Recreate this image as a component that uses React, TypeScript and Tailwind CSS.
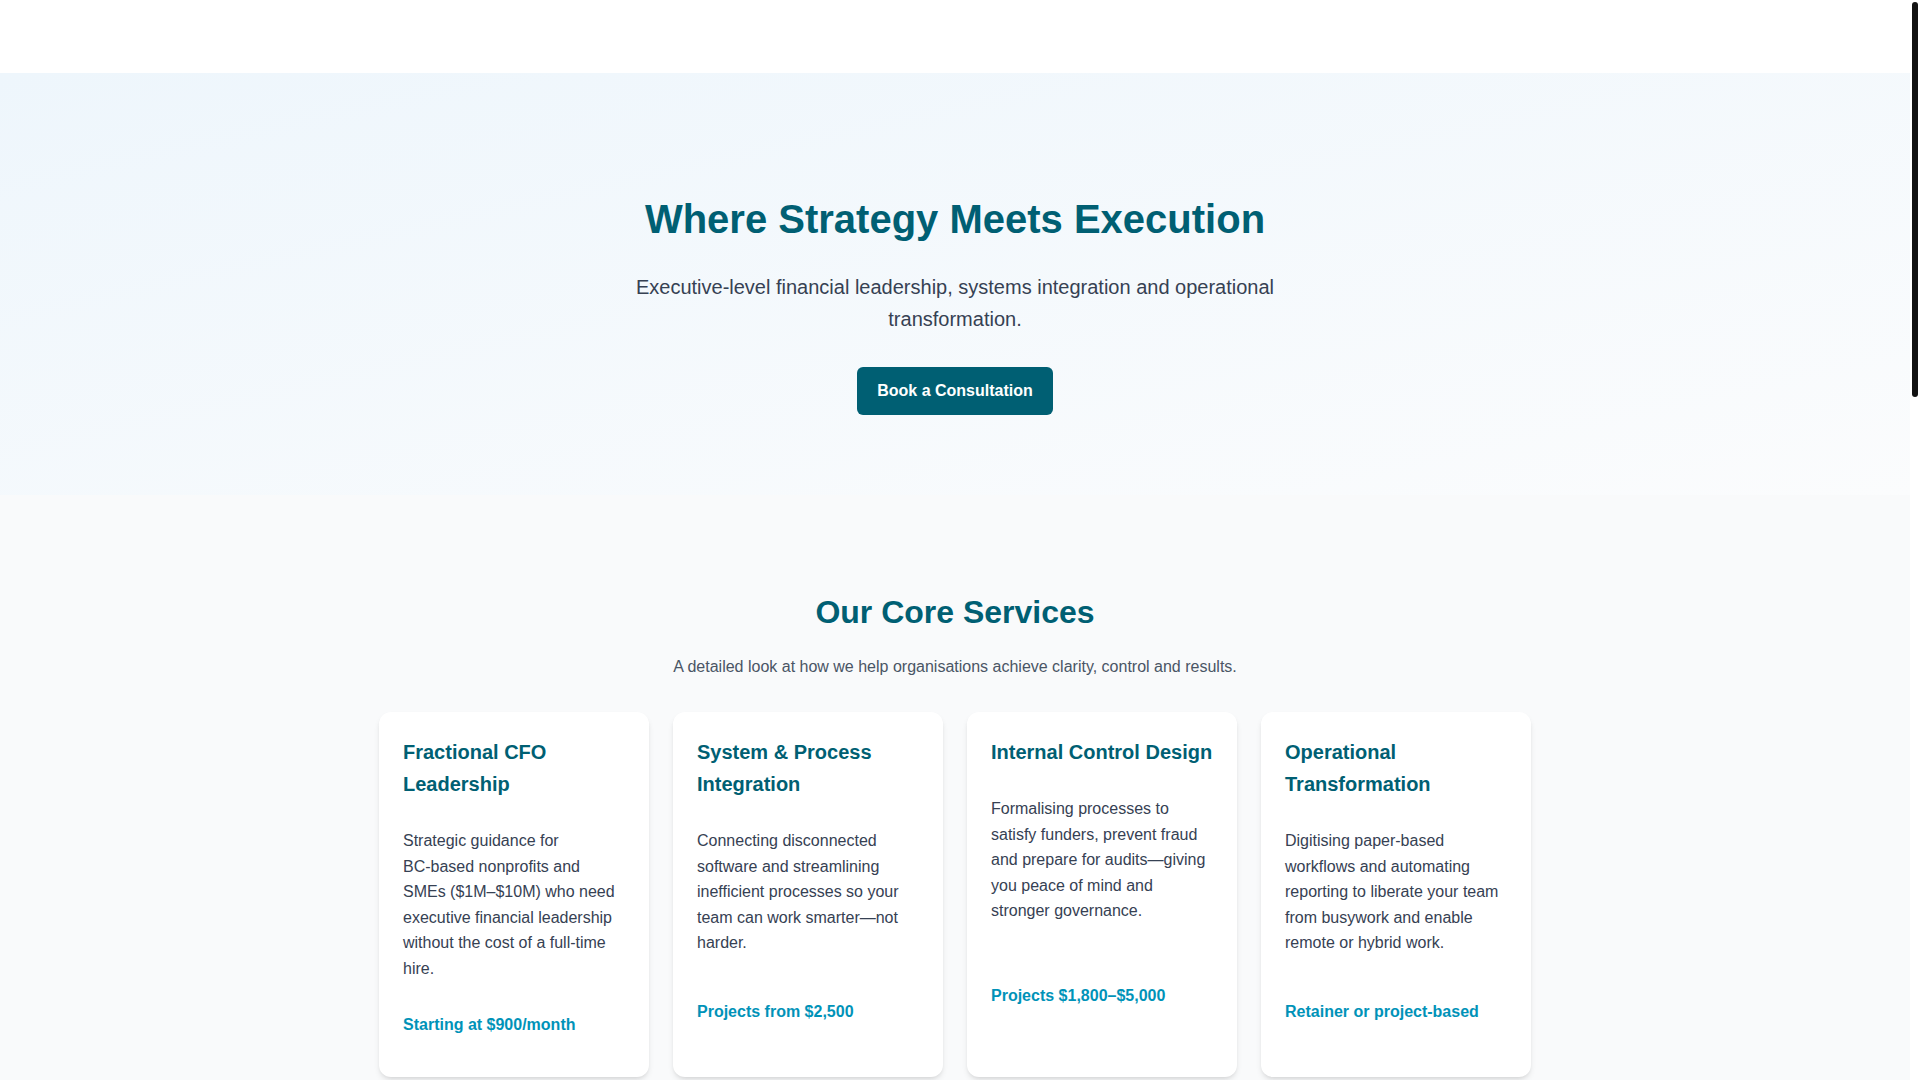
import type { ReactNode } from "react";

const services: { title: string; body: ReactNode; price: string }[] = [
  {
    title: "Fractional CFO Leadership",
    body: (
      <>
        Strategic guidance for <span className="whitespace-nowrap">BC-based</span> nonprofits and SMEs
        ($1M–$10M) who need executive financial leadership without the cost of a full-time hire.
      </>
    ),
    price: "Starting at $900/month",
  },
  {
    title: "System & Process Integration",
    body: "Connecting disconnected software and streamlining inefficient processes so your team can work smarter—not harder.",
    price: "Projects from $2,500",
  },
  {
    title: "Internal Control Design",
    body: "Formalising processes to satisfy funders, prevent fraud and prepare for audits—giving you peace of mind and stronger governance.",
    price: "Projects $1,800–$5,000",
  },
  {
    title: "Operational Transformation",
    body: "Digitising paper-based workflows and automating reporting to liberate your team from busywork and enable remote or hybrid work.",
    price: "Retainer or project-based",
  },
];

function ServiceCard({ title, body, price }: { title: string; body: ReactNode; price: string }) {
  return (
    <div className="flex min-h-[365px] flex-col rounded-xl bg-white p-6 shadow-md">
      <h3 className="mb-7 text-xl leading-8 font-bold text-[#005f73]">{title}</h3>
      <p className="text-base leading-[1.6] text-gray-700">{body}</p>
      <div className="flex flex-1 items-center pt-4">
        <span className="text-base leading-6 font-bold text-cyan-600">{price}</span>
      </div>
    </div>
  );
}

export default function App() {
  return (
    <div className="flex h-screen bg-white font-['Liberation_Sans',Arial,sans-serif]">
      <div className="flex-1 overflow-y-auto [scrollbar-width:none]">
        <header className="h-[73px] bg-white" />

        <section className="bg-linear-to-br from-[#eef6fc] to-[#fbfcfd] px-6 pt-[122px] pb-20 text-center">
          <h1 className="mb-7 text-[40px] leading-[1.2] font-bold text-[#005f73]">
            Where Strategy Meets Execution
          </h1>
          <p className="mx-auto max-w-2xl text-xl leading-8 text-gray-700">
            Executive-level financial leadership, systems integration and operational transformation.
          </p>
          <a
            href="#"
            className="mt-8 inline-block rounded-md bg-[#005f73] px-5 py-3 text-base leading-6 font-bold text-white"
          >
            Book a Consultation
          </a>
        </section>

        <section className="bg-gray-50 px-6 pt-[98px] pb-24">
          <div className="mx-auto max-w-6xl">
            <h2 className="text-center text-[32px] leading-[1.2] font-bold text-[#005f73]">
              Our Core Services
            </h2>
            <p className="mt-[23px] text-center text-base leading-[1.6] text-gray-600">
              A detailed look at how we help organisations achieve clarity, control and results.
            </p>
            <div className="mt-8 grid grid-cols-4 gap-6">
              {services.map((s) => (
                <ServiceCard key={s.title} {...s} />
              ))}
            </div>
          </div>
        </section>

        <section className="min-h-[1750px] bg-white" />
      </div>

      {/* scrollbar */}
      <div className="w-[10px] shrink-0 bg-white pt-[2px] pl-[2px]">
        <div className="h-[395px] w-[6px] rounded-full bg-[#121212]" />
      </div>
    </div>
  );
}
